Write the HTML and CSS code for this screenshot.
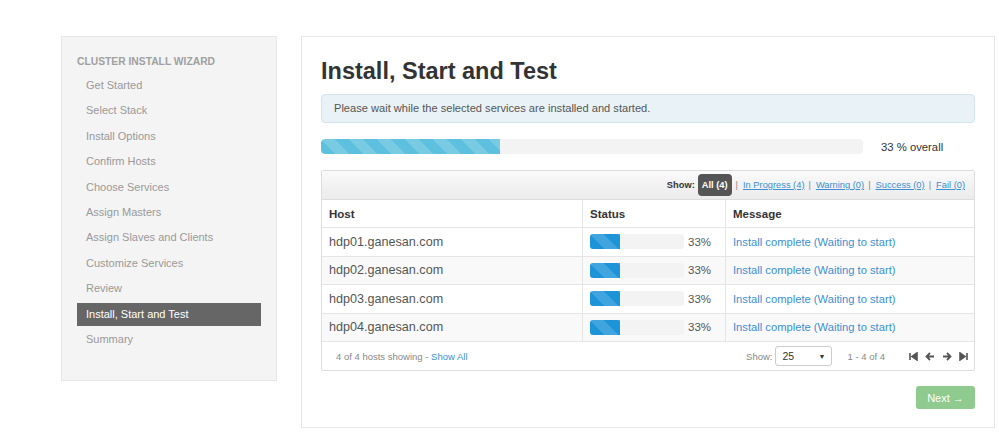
FILE: index.html
```html
<!DOCTYPE html>
<html lang="en">
<head>
  <meta charset="UTF-8" />
  <title>Install, Start and Test</title>
  <link rel="stylesheet" href="styles.css">
</head>
<body>
  <div class="wizard">
    <div class="sidebar">
      <h4>Cluster Install Wizard</h4>
      <ul class="steps">
        <li>Get Started</li>
        <li>Select Stack</li>
        <li>Install Options</li>
        <li>Confirm Hosts</li>
        <li>Choose Services</li>
        <li>Assign Masters</li>
        <li>Assign Slaves and Clients</li>
        <li>Customize Services</li>
        <li>Review</li>
        <li class="active">Install, Start and Test</li>
        <li>Summary</li>
      </ul>
    </div>

    <div class="content">
      <h2>Install, Start and Test</h2>
      <div class="alert">Please wait while the selected services are installed and started.</div>

      <div class="overall">
        <div class="progress striped"><div class="bar" style="width: 33%"></div></div>
        <span class="overall-label">33 % overall</span>
      </div>

      <div class="hosts">
        <div class="toolbar">
          <b>Show:</b>
          <span class="badge">All (4)</span>
          <span class="sep">|</span><a href="#">In Progress (4)</a>
          <span class="sep">|</span><a href="#">Warning (0)</a>
          <span class="sep">|</span><a href="#">Success (0)</a>
          <span class="sep">|</span><a href="#">Fail (0)</a>
        </div>
        <table>
          <thead>
            <tr><th class="col-host">Host</th><th class="col-status">Status</th><th>Message</th></tr>
          </thead>
          <tbody>
            <tr>
              <td>hdp01.ganesan.com</td>
              <td><div class="status"><div class="mini"><div class="bar" style="width: 32%"></div></div><span>33%</span></div></td>
              <td><a href="#">Install complete (Waiting to start)</a></td>
            </tr>
            <tr>
              <td>hdp02.ganesan.com</td>
              <td><div class="status"><div class="mini"><div class="bar" style="width: 32%"></div></div><span>33%</span></div></td>
              <td><a href="#">Install complete (Waiting to start)</a></td>
            </tr>
            <tr>
              <td>hdp03.ganesan.com</td>
              <td><div class="status"><div class="mini"><div class="bar" style="width: 32%"></div></div><span>33%</span></div></td>
              <td><a href="#">Install complete (Waiting to start)</a></td>
            </tr>
            <tr>
              <td>hdp04.ganesan.com</td>
              <td><div class="status"><div class="mini"><div class="bar" style="width: 32%"></div></div><span>33%</span></div></td>
              <td><a href="#">Install complete (Waiting to start)</a></td>
            </tr>
          </tbody>
        </table>
        <div class="footer">
          <span class="count">4 of 4 hosts showing - <a href="#">Show All</a></span>
          <span class="show">Show:</span>
          <div class="select">25 <span class="caret">▼</span></div>
          <span class="range">1 - 4 of 4</span>
          <div class="pager">
            <svg width="9" height="9" viewBox="0 0 9 9"><path d="M1 1v7M8 1L3 4.5 8 8z" stroke="#555" stroke-width="1.6" fill="#555"/></svg>
            <svg width="10" height="9" viewBox="0 0 10 9"><path d="M9 4.5H2M5 1L1.5 4.5 5 8" stroke="#555" stroke-width="1.8" fill="none"/></svg>
            <svg width="10" height="9" viewBox="0 0 10 9"><path d="M1 4.5h7M5 1l3.5 3.5L5 8" stroke="#555" stroke-width="1.8" fill="none"/></svg>
            <svg width="9" height="9" viewBox="0 0 9 9"><path d="M8 1v7M1 1l5 3.5L1 8z" stroke="#555" stroke-width="1.6" fill="#555"/></svg>
          </div>
        </div>
      </div>

      <div class="actions">
        <button type="button">Next &rarr;</button>
      </div>
    </div>
  </div>
</body>
</html>
```
FILE: styles.css
```css
body {
  margin: 0;
  background: #fff;
  font-family: "Liberation Sans", Arial, sans-serif;
  color: #333;
}

a {
  color: #3b8fd3;
  text-decoration: none;
}

.wizard {
  display: flex;
  align-items: flex-start;
  gap: 24px;
  padding: 36px 0 0 61px;
}

/* sidebar */

.sidebar {
  width: 184px;
  height: 328px;
  padding: 15px 15px 0 15px;
  background: #f4f4f4;
  border: 1px solid #e6e6e6;
}

.sidebar h4 {
  margin: 0 0 2px;
  line-height: 20px;
  font-size: 10.3px;
  font-weight: bold;
  text-transform: uppercase;
  color: #a0a0a0;
}

.steps {
  list-style: none;
  margin: 0;
  padding: 0;
}

.steps li {
  height: 23px;
  line-height: 23px;
  margin-bottom: 2.4px;
  padding-left: 9px;
  font-size: 11px;
  color: #999;
}

.steps li.active {
  background: #666;
  color: #fff;
}

/* main panel */

.content {
  width: 654px;
  height: 371px;
  padding: 19px 19px 0 19px;
  border: 1px solid #e6e6e6;
}

h2 {
  margin: 0;
  line-height: 30px;
  font-size: 23.5px;
  font-weight: bold;
  color: #333;
}

.alert {
  margin-top: 8px;
  height: 27px;
  line-height: 27px;
  padding: 0 12px;
  background: #e9f2f7;
  border: 1px solid #d3e4ee;
  border-radius: 4px;
  font-size: 11.1px;
  color: #555;
}

.overall {
  display: flex;
  align-items: center;
  margin-top: 16px;
}

.progress {
  width: 542px;
  height: 15px;
  background: #f3f3f3;
  border-radius: 4px;
  overflow: hidden;
}

.progress .bar {
  height: 100%;
  background-color: #5cc0de;
  background-image: linear-gradient(45deg, rgba(255,255,255,0.18) 25%, transparent 25%, transparent 50%, rgba(255,255,255,0.18) 50%, rgba(255,255,255,0.18) 75%, transparent 75%, transparent);
  background-size: 28px 28px;
  border-radius: 4px 0 0 4px;
}

.overall-label {
  margin-left: 18px;
  font-size: 11.3px;
  color: #333;
}

/* hosts table */

.hosts {
  margin-top: 16px;
  border: 1px solid #ddd;
  border-radius: 2px;
}

.toolbar {
  display: flex;
  align-items: center;
  justify-content: flex-end;
  height: 28px;
  padding-right: 9px;
  background: linear-gradient(#fafafa, #ebebeb);
  border-bottom: 1px solid #ddd;
  font-size: 9.3px;
  color: #888;
}

.toolbar b {
  color: #333;
  margin-right: 3px;
}

.toolbar a {
  text-decoration: underline;
}

.badge {
  background: #555;
  color: #fff;
  font-weight: bold;
  padding: 0 4px;
  line-height: 22px;
  border-radius: 4px;
}

.sep {
  margin: 0 5px 0 4px;
}

table {
  width: 100%;
  border-collapse: collapse;
  font-size: 12.6px;
  color: #555;
}

th,
td {
  height: 27.5px;
  padding: 0 7px;
  text-align: left;
  border-bottom: 1px solid #e5e5e5;
  border-left: 1px solid #e5e5e5;
}

th:first-child,
td:first-child {
  border-left: none;
}

th {
  height: 27px;
  font-size: 11.5px;
  color: #333;
}

td a {
  font-size: 11.2px;
}

tbody tr:nth-child(even) td {
  background: #f9f9f9;
}

.col-host {
  width: 246px;
}

.col-status {
  width: 128px;
}

.status {
  display: flex;
  align-items: center;
}

.status span {
  margin-left: 4px;
  font-size: 11.5px;
  color: #555;
}

.mini {
  width: 94px;
  height: 15px;
  background: #f3f3f3;
  border-radius: 3px;
  overflow: hidden;
}

.mini .bar {
  height: 100%;
  background-color: #1e94d8;
  background-image: linear-gradient(45deg, rgba(255,255,255,0.15) 25%, transparent 25%, transparent 50%, rgba(255,255,255,0.15) 50%, rgba(255,255,255,0.15) 75%, transparent 75%, transparent);
  background-size: 28px 28px;
}

.footer {
  display: flex;
  align-items: center;
  height: 28px;
  padding: 0 6px 0 14px;
  font-size: 9.5px;
  color: #888;
}

.count {
  flex: 1;
}

.show {
  margin-right: 2px;
}

.select {
  display: flex;
  justify-content: space-between;
  align-items: center;
  width: 43px;
  height: 18px;
  padding: 0 5px 0 7px;
  border: 1px solid #ccc;
  border-radius: 3px;
  background: #fff;
  font-size: 10.5px;
  color: #333;
}

.caret {
  font-size: 7px;
}

.range {
  margin-left: 16px;
}

.pager {
  display: flex;
  gap: 7px;
  margin-left: 24px;
}

/* actions */

.actions {
  display: flex;
  justify-content: flex-end;
  margin-top: 15px;
}

button {
  width: 59px;
  height: 23px;
  padding: 0;
  background: #8fca8f;
  color: #fff;
  border: none;
  border-radius: 3px;
  font-family: inherit;
  font-size: 11px;
}
```
